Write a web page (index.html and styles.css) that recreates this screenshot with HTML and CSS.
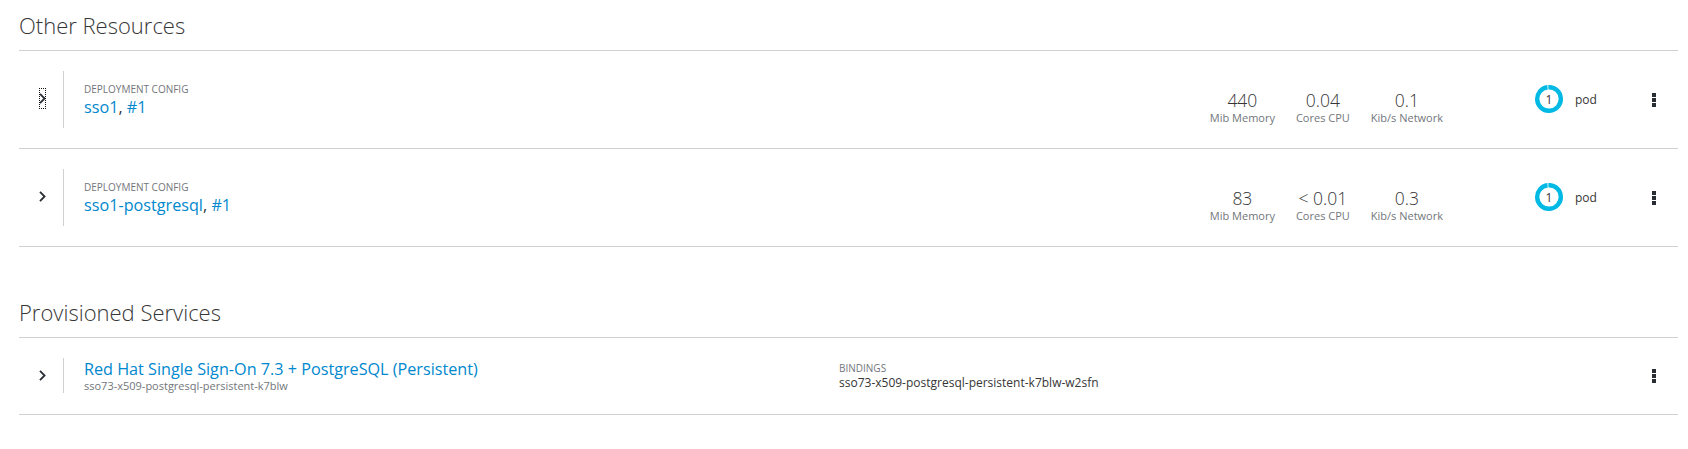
FILE: index.html
```html
<!DOCTYPE html>
<html>
<head>
<meta charset="utf-8">
<link rel="stylesheet" href="styles.css">
</head>
<body>
<div class="page">
  <section class="section">
    <div class="section-head"><h2>Other Resources</h2></div>

    <div class="row">
      <div class="toggle"><span class="chev focus"><svg width="7" height="11" viewBox="0 0 7 11"><path d="M1 0.8 L5.6 5.5 L1 10.2" fill="none" stroke="#292e34" stroke-width="1.8"/></svg></span></div>
      <div class="main">
        <div class="label">Deployment Config</div>
        <div class="name"><a class="link">sso1</a>, <a class="link">#1</a></div>
      </div>
      <div class="metrics">
        <div class="metric"><div class="value">440</div><div class="mlabel">Mib Memory</div></div>
        <div class="metric"><div class="value">0.04</div><div class="mlabel">Cores CPU</div></div>
        <div class="metric"><div class="value">0.1</div><div class="mlabel">Kib/s Network</div></div>
      </div>
      <div class="pods">
        <div class="donut"><svg width="28" height="28" viewBox="0 0 28 28"><circle cx="14" cy="14" r="11.8" fill="none" stroke="#00b9e4" stroke-width="4.4" stroke-dasharray="72.8 1.4" transform="rotate(-93 14 14)"/></svg><span class="donut-num">1</span></div>
        <span class="pod-text">pod</span>
      </div>
      <div class="kebab"><svg width="4" height="14" viewBox="0 0 4 14"><rect x="0" y="0" width="4" height="4" fill="#292e34"/><rect x="0" y="5" width="4" height="4" fill="#292e34"/><rect x="0" y="10" width="4" height="4" fill="#292e34"/></svg></div>
    </div>

    <div class="row">
      <div class="toggle"><span class="chev"><svg width="7" height="11" viewBox="0 0 7 11"><path d="M1 0.8 L5.6 5.5 L1 10.2" fill="none" stroke="#292e34" stroke-width="1.8"/></svg></span></div>
      <div class="main">
        <div class="label">Deployment Config</div>
        <div class="name"><a class="link">sso1-postgresql</a>, <a class="link">#1</a></div>
      </div>
      <div class="metrics">
        <div class="metric"><div class="value">83</div><div class="mlabel">Mib Memory</div></div>
        <div class="metric"><div class="value">&lt; 0.01</div><div class="mlabel">Cores CPU</div></div>
        <div class="metric"><div class="value">0.3</div><div class="mlabel">Kib/s Network</div></div>
      </div>
      <div class="pods">
        <div class="donut"><svg width="28" height="28" viewBox="0 0 28 28"><circle cx="14" cy="14" r="11.8" fill="none" stroke="#00b9e4" stroke-width="4.4" stroke-dasharray="72.8 1.4" transform="rotate(-93 14 14)"/></svg><span class="donut-num">1</span></div>
        <span class="pod-text">pod</span>
      </div>
      <div class="kebab"><svg width="4" height="14" viewBox="0 0 4 14"><rect x="0" y="0" width="4" height="4" fill="#292e34"/><rect x="0" y="5" width="4" height="4" fill="#292e34"/><rect x="0" y="10" width="4" height="4" fill="#292e34"/></svg></div>
    </div>
  </section>

  <section class="section section-second">
    <div class="section-head"><h2>Provisioned Services</h2></div>
    <div class="row row-service">
      <div class="toggle toggle-service"><span class="chev"><svg width="7" height="11" viewBox="0 0 7 11"><path d="M1 0.8 L5.6 5.5 L1 10.2" fill="none" stroke="#292e34" stroke-width="1.8"/></svg></span></div>
      <div class="main main-service">
        <div class="svc-name"><a class="link">Red Hat Single Sign-On 7.3 + PostgreSQL (Persistent)</a></div>
        <div class="svc-sub">sso73-x509-postgresql-persistent-k7blw</div>
      </div>
      <div class="bindings">
        <div class="label">Bindings</div>
        <div class="bind-value">sso73-x509-postgresql-persistent-k7blw-w2sfn</div>
      </div>
      <div class="kebab kebab-service"><svg width="4" height="14" viewBox="0 0 4 14"><rect x="0" y="0" width="4" height="4" fill="#292e34"/><rect x="0" y="5" width="4" height="4" fill="#292e34"/><rect x="0" y="10" width="4" height="4" fill="#292e34"/></svg></div>
    </div>
  </section>
</div>
</body>
</html>
```

FILE: styles.css
```css
html, body {
  margin: 0;
  padding: 0;
  background: #ffffff;
}
body {
  font-family: "Open Sans", "Liberation Sans", sans-serif;
  color: #363636;
}
.page {
  padding: 0 10px 0 19px;
}
.section-head {
  padding: 10px 0 10px;
  border-bottom: 1px solid #d1d1d1;
}
.section-head h2 {
  margin: 0;
  font-size: 22px;
  font-weight: 300;
  line-height: 30px;
  color: #363636;
}
.section-second {
  margin-top: 40px;
}
.row {
  display: flex;
  align-items: flex-start;
  height: 97px;
  border-bottom: 1px solid #d1d1d1;
}
.toggle {
  width: 44px;
  flex: none;
  padding-left: 20px;
  box-sizing: border-box;
  margin-top: 37px;
}
.chev {
  display: flex;
  align-items: center;
  justify-content: center;
  width: 7px;
  height: 21px;
  box-sizing: border-box;
}
.chev.focus {
  outline: 1px dotted #111;
  outline-offset: -1px;
}
.main {
  flex: 1;
  margin-top: 20px;
  height: 57px;
  border-left: 1px solid #d1d1d1;
  padding: 11px 0 0 20px;
  box-sizing: border-box;
}
.label {
  font-size: 10px;
  line-height: 14px;
  text-transform: uppercase;
  color: #72767b;
}
.name {
  font-size: 16.2px;
  line-height: 22px;
  color: #363636;
}
.link {
  color: #0088ce;
  text-decoration: none;
}
.metrics {
  display: flex;
  gap: 21px;
  margin-top: 39px;
  margin-right: 92px;
}
.metric {
  text-align: center;
}
.value {
  font-size: 17.5px;
  font-weight: 300;
  line-height: 20px;
  color: #363636;
}
.mlabel {
  font-size: 11px;
  line-height: 15px;
  color: #72767b;
  white-space: nowrap;
}
.pods {
  width: 112px;
  flex: none;
  display: flex;
  align-items: center;
  gap: 12px;
  margin-top: 34px;
}
.donut {
  position: relative;
  width: 28px;
  height: 28px;
}
.donut svg {
  display: block;
}
.donut-num {
  position: absolute;
  inset: 0;
  display: flex;
  align-items: center;
  justify-content: center;
  font-size: 12px;
  color: #363636;
}
.pod-text {
  font-size: 12px;
  color: #363636;
}
.kebab {
  width: 31px;
  flex: none;
  box-sizing: border-box;
  padding-left: 5px;
  margin-top: 42px;
}
.kebab svg {
  display: block;
}
.row-service {
  height: 76px;
}
.toggle-service {
  margin-top: 27px;
}
.main-service {
  flex: none;
  width: 776px;
  height: 35px;
  padding: 1px 0 0 20px;
}
.svc-name {
  font-size: 16.2px;
  line-height: 21px;
}
.svc-sub {
  font-size: 11px;
  line-height: 12px;
  color: #72767b;
}
.bindings {
  flex: 1;
  margin-top: 23px;
}
.bind-value {
  font-size: 12px;
  line-height: 16px;
  color: #363636;
}
.kebab-service {
  margin-top: 31px;
}
```
